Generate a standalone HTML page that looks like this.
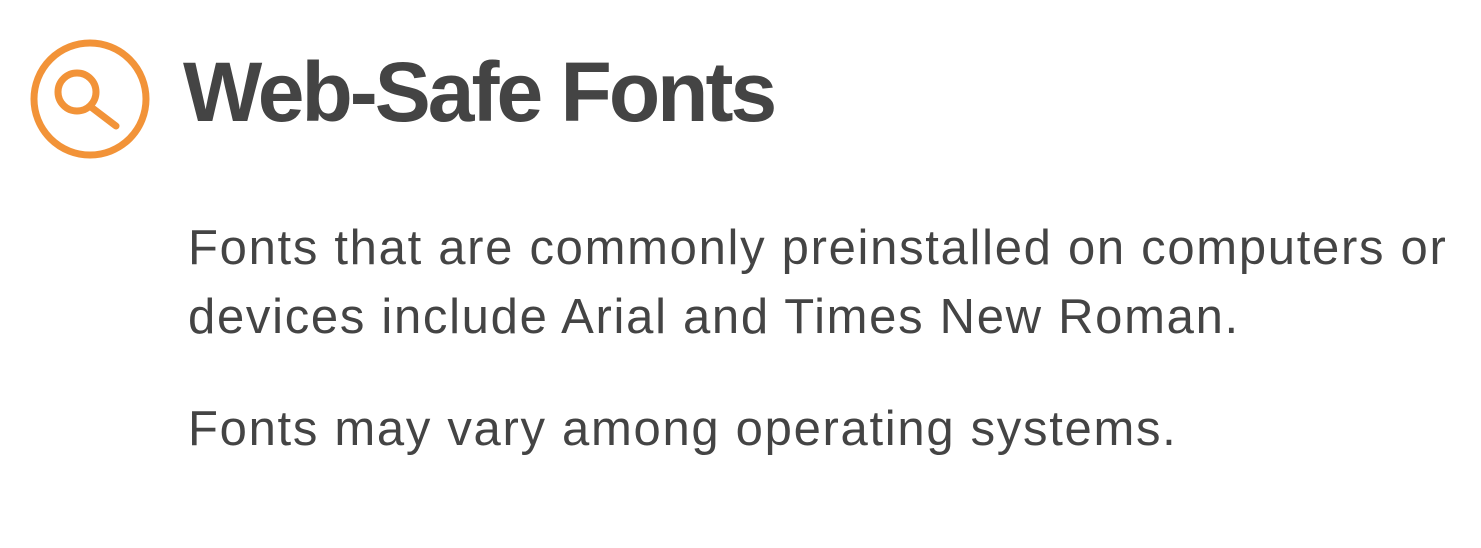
<!DOCTYPE html>
<html><head><style>
body{margin:0;width:1481px;height:548px;background:#fff;overflow:hidden;position:relative;font-family:"Liberation Sans",sans-serif;color:#444}
.t{position:absolute;left:183px;top:50px;font-size:84px;font-weight:bold;letter-spacing:-3px;line-height:1;white-space:nowrap}
.p{position:absolute;left:188px;font-size:49px;line-height:1;white-space:nowrap;letter-spacing:1.7px}
</style></head><body>
<svg style="position:absolute;left:0;top:0" width="200" height="200">
<circle cx="90" cy="99" r="56" fill="none" stroke="#f29338" stroke-width="7"/>
<circle cx="77" cy="92" r="19" fill="none" stroke="#f29338" stroke-width="7"/>
<line x1="91" y1="107" x2="116" y2="126" stroke="#f29338" stroke-width="7" stroke-linecap="round"/>
</svg>
<div class="t">Web-Safe Fonts</div>
<div class="p" style="top:224px">Fonts that are commonly preinstalled on computers or</div>
<div class="p" style="top:293px">devices include Arial and Times New Roman.</div>
<div class="p" style="top:405px">Fonts may vary among operating systems.</div>
</body></html>
